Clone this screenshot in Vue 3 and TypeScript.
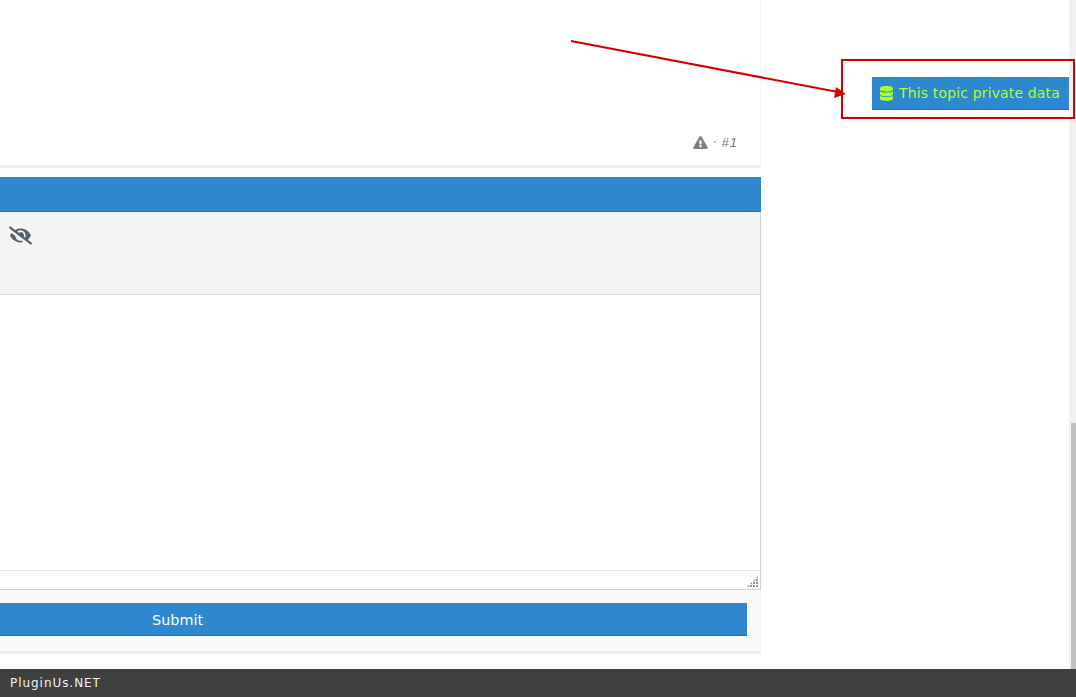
<script setup lang="ts">
const siteName = 'PluginUs.NET';
</script>

<template>
  <div class="page">
    <div class="content">
      <main class="main">
        <section class="post">
          <div class="post-meta">
            <svg class="warn" viewBox="0 0 576 512" aria-hidden="true">
              <path d="M569.5 440 329.6 24c-18.400-32-64.700-32-83.200 0L6.500 440c-18.400 31.900 4.600 72 41.600 72h479.800c36.900 0 60-40 41.600-72zM288 354c25.400 0 46 20.600 46 46s-20.600 46-46 46-46-20.600-46-46 20.600-46 46-46zm-43.700-165.400c-.4-6.900 5.100-12.600 12-12.600h63.400c6.900 0 12.400 5.700 12 12.600l-7.300 136c-.3 6.400-5.600 11.400-12 11.400h-48.800c-6.400 0-11.700-5-12-11.400z" />
            </svg>
            <span class="dot">·</span>
            <em class="num">#1</em>
          </div>
        </section>

        <section class="reply">
          <div class="reply-head"></div>
          <div class="editor">
            <div class="toolbar">
              <svg class="eye" viewBox="0 0 640 512" aria-hidden="true">
                <path d="M320 400c-75.800 0-137.200-58.700-142.800-133L72.300 185.800c-13.800 17.300-26.500 35.600-36.800 55.700a32.400 32.400 0 0 0 0 29.200C89.700 376.400 197.100 448 320 448c26.900 0 52.900-4 77.900-10.500L346 397.400a144.100 144.100 0 0 1-26 2.600zm313.800 58.100-110.500-85.400a331.300 331.300 0 0 0 81.200-102 32.400 32.400 0 0 0 0-29.200C550.300 135.600 442.900 64 320 64a308.200 308.200 0 0 0-147.300 37.700L45.500 3.400A16 16 0 0 0 23 6.200L3.400 31.500A16 16 0 0 0 6.200 54l588.300 454.700a16 16 0 0 0 22.500-2.800l19.600-25.300a16 16 0 0 0-2.800-22.500zm-183.700-142-39.300-30.400A94.700 94.700 0 0 0 416 256a94.800 94.800 0 0 0-121.300-92.200A47.700 47.700 0 0 1 304 192a46.600 46.600 0 0 1-1.500 10l-73.600-56.900A142.300 142.300 0 0 1 320 112a144 144 0 0 1 144 144c0 21.600-5.300 41.800-13.900 60.100z" />
              </svg>
            </div>
            <div class="textarea"></div>
            <div class="statusbar">
              <span class="grip"></span>
            </div>
          </div>
          <div class="actions">
            <button class="submit" type="button">
              <span class="submit-label">Submit</span>
            </button>
          </div>
        </section>
      </main>

      <aside class="side">
        <div class="callout">
          <a class="private-btn">
            <svg class="db" viewBox="0 0 448 512" aria-hidden="true">
              <path d="M448 73.100v45.700C448 159.100 347.700 192 224 192S0 159.100 0 118.900V73.100C0 32.900 100.300 0 224 0s224 32.900 224 73.100zm0 102.900v102.900C448 319.100 347.700 352 224 352S0 319.100 0 278.900V176c48.100 33.100 136.200 48.600 224 48.600S399.900 209.100 448 176zm0 160v102.900C448 479.100 347.700 512 224 512S0 479.100 0 438.900V336c48.100 33.100 136.200 48.600 224 48.600S399.900 369.100 448 336z" />
            </svg>
            This topic private data
          </a>
        </div>
      </aside>

      <svg class="arrow" viewBox="0 0 1076 697" aria-hidden="true">
        <line x1="571" y1="41" x2="838" y2="92" stroke="#d40000" stroke-width="2" />
        <polygon points="846,94 834,98 836,87" fill="#d40000" />
      </svg>

      <div class="scrollbar">
        <div class="thumb"></div>
      </div>
    </div>
    <footer class="footer">{{ siteName }}</footer>
  </div>
</template>

<style scoped>
.page {
  width: 1076px;
  height: 697px;
  display: flex;
  flex-direction: column;
  overflow: hidden;
  background: #fff;
  font-family: "DejaVu Sans", Verdana, sans-serif;
}
.content {
  position: relative;
  flex: 1;
  display: flex;
  min-height: 0;
}
.main {
  width: 761px;
  flex: none;
  display: flex;
  flex-direction: column;
  gap: 9px;
}
.post {
  height: 168px;
  box-sizing: border-box;
  border-right: 1px solid #f2f2f2;
  border-bottom: 3px solid #eeeeee;
  display: flex;
  align-items: flex-end;
  justify-content: flex-end;
  padding: 0 23px 15px 0;
}
.post-meta {
  display: flex;
  align-items: center;
  gap: 5px;
  font-size: 12px;
  color: #888;
}
.warn {
  width: 15px;
  height: 13px;
  fill: #808080;
}
.num {
  font-family: "Liberation Sans", Arial, sans-serif;
  font-size: 13px;
  letter-spacing: 1px;
  margin-right: -1px;
  color: #777;
}
.reply-head {
  height: 35px;
  box-sizing: border-box;
  background: #2e88cf;
  border-bottom: 1px solid #2a6fa8;
}
.editor {
  border-right: 1px solid #d4d4d4;
  border-bottom: 1px solid #cfcfcf;
  box-shadow: 0 1px 1px rgba(0, 0, 0, 0.08);
}
.toolbar {
  height: 83px;
  box-sizing: border-box;
  background: #f4f4f4;
  border-bottom: 1px solid #dcdcdc;
  padding: 14px 0 0 9px;
}
.eye {
  display: block;
  width: 23px;
  height: 19px;
  fill: #55606a;
}
.textarea {
  height: 275px;
  background: #fff;
}
.statusbar {
  height: 18px;
  border-top: 1px solid #e8e8e8;
  position: relative;
}
.grip {
  position: absolute;
  right: 2px;
  bottom: 2px;
  width: 11px;
  height: 11px;
  background-image: radial-gradient(circle at 1px 1px, #8096b4 1px, transparent 1px);
  background-size: 3px 3px;
  clip-path: polygon(100% 0, 100% 100%, 0 100%);
}
.actions {
  height: 64px;
  box-sizing: border-box;
  background: #f9f9f9;
  border-right: 1px solid #f2f2f2;
  border-bottom: 3px solid #eeeeee;
  padding: 13px 13px 0 0;
}
.submit {
  display: flex;
  align-items: center;
  width: 100%;
  height: 33px;
  border: 0;
  border-bottom: 1px solid #2a6fa8;
  background: #2e88cf;
  padding: 1px 0 0 152px;
  color: #fff;
  font: 14.4px "DejaVu Sans", Verdana, sans-serif;
}
.side {
  flex: 1;
  min-width: 0;
  position: relative;
  z-index: 1;
}
.callout {
  margin: 59px 1px 0 80px;
  height: 60px;
  box-sizing: border-box;
  border: 2px solid #d40000;
  padding: 16px 0 0 29px;
}
.private-btn {
  width: 197px;
  height: 33px;
  box-sizing: border-box;
  display: flex;
  align-items: center;
  gap: 6px;
  padding-left: 8px;
  background: #2e88cf;
  border-bottom: 1px solid #2a6fa8;
  color: #adff2f;
  font-size: 14px;
  letter-spacing: 0.15px;
  white-space: nowrap;
}
.db {
  width: 13px;
  height: 15px;
  fill: #adff2f;
  flex: none;
}
.arrow {
  position: absolute;
  left: 0;
  top: 0;
  width: 1076px;
  height: 697px;
  pointer-events: none;
}
.scrollbar {
  position: absolute;
  right: 0;
  top: 0;
  bottom: 0;
  width: 7px;
  background: #f1f1f1;
}
.thumb {
  position: absolute;
  left: 2px;
  right: 0;
  top: 423px;
  bottom: 0;
  background: #c1c1c1;
}
.footer {
  height: 28px;
  flex: none;
  background: #404040;
  color: #f2f2f2;
  font-size: 12px;
  letter-spacing: 0.95px;
  line-height: 28px;
  padding-left: 10px;
}
</style>
